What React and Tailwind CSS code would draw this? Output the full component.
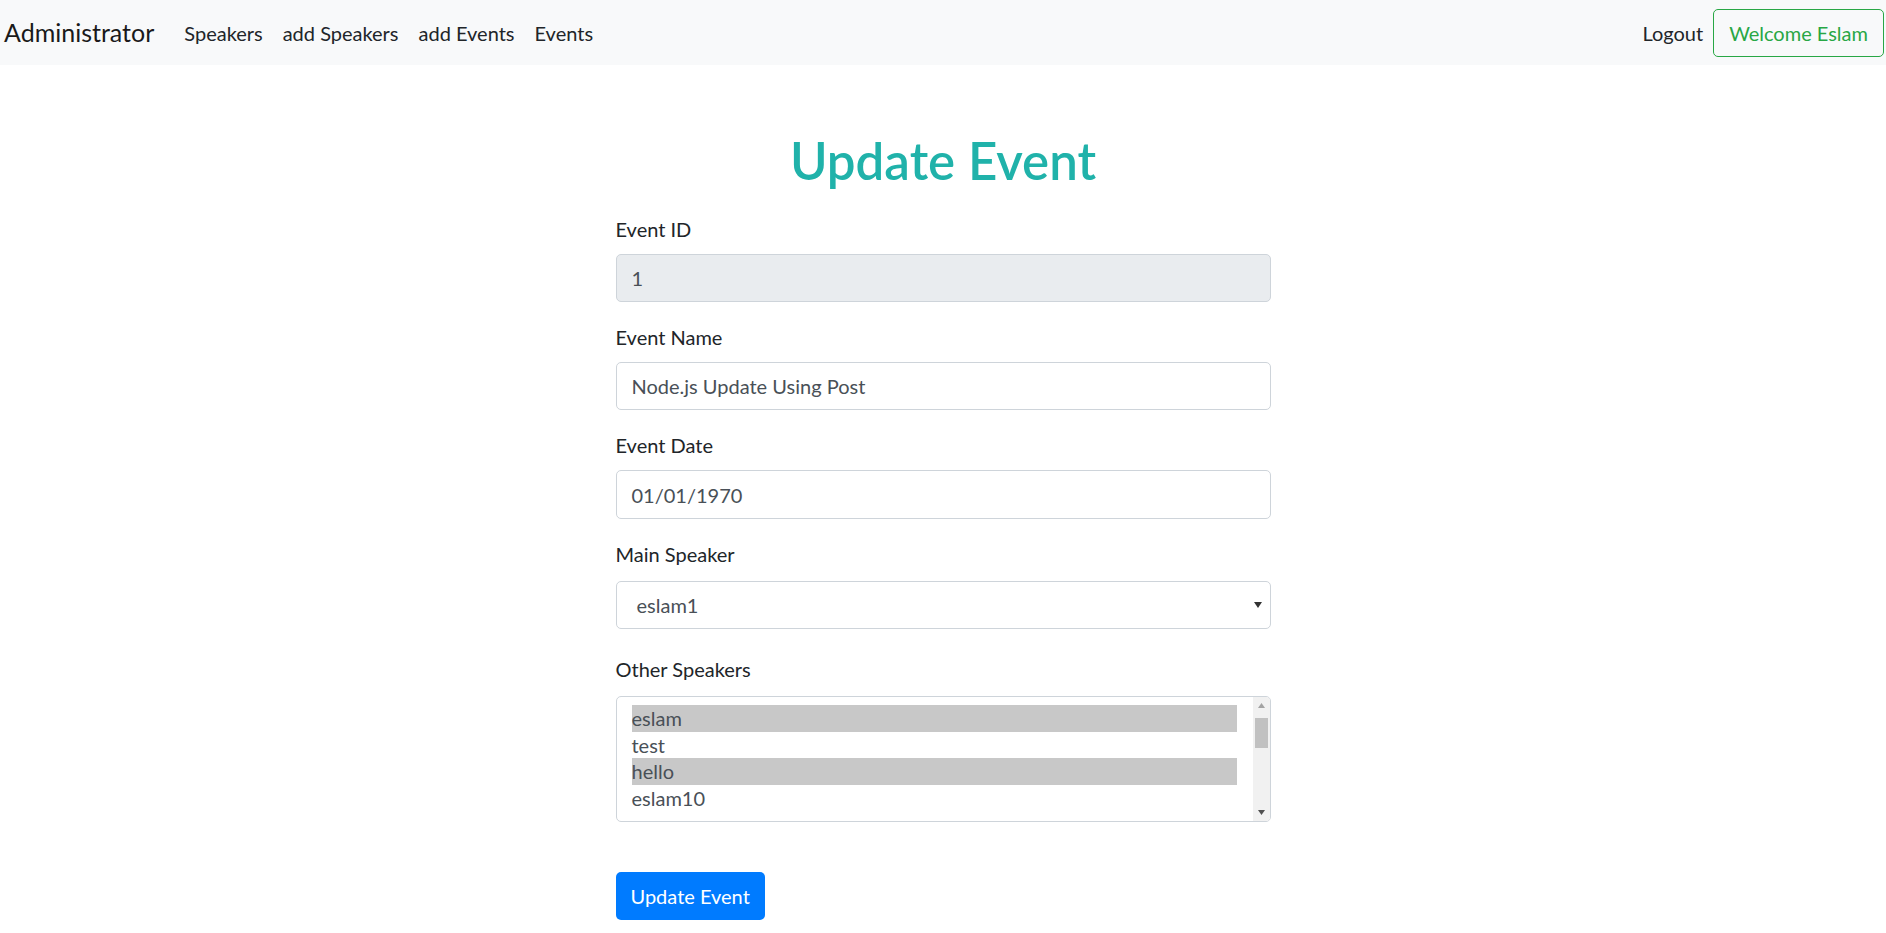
import React from 'react'

const font = { fontFamily: '"Segoe UI", Lato, "Noto Sans", sans-serif' }

function Field({ label, children, className = 'mb-[20px]', labelGap = 'mb-[10px]' }) {
  return (
    <div className={className}>
      <label className={`block text-[20px] leading-[30px] text-[#212529] ${labelGap}`}>{label}</label>
      {children}
    </div>
  )
}

function TextBox({ value, disabled, tall }) {
  return (
    <div
      className={`${tall ? 'h-[49px]' : 'h-[48px]'} flex items-center px-[15px] border border-[#ced4da] rounded-[5px] text-[20px] text-[#495057] ${
        disabled ? 'bg-[#e9ecef]' : 'bg-white'
      }`}
    >
      {value}
    </div>
  )
}

export default function App() {
  const speakers = [
    { name: 'eslam', selected: true },
    { name: 'test', selected: false },
    { name: 'hello', selected: true },
    { name: 'eslam10', selected: false },
  ]

  return (
    <div className="min-h-screen bg-white" style={font}>
      <nav className="h-[65px] bg-[#f8f9fa] flex items-center justify-between pl-[4px] pr-[2px]">
        <div className="flex items-center">
          <span className="text-[25px] text-[#1a1a1a] mr-[20px]">Administrator</span>
          {['Speakers', 'add Speakers', 'add Events', 'Events'].map((l) => (
            <a key={l} className="px-[10px] text-[20px] text-[#212529]">
              {l}
            </a>
          ))}
        </div>
        <div className="flex items-center">
          <a className="px-[10px] text-[20px] text-[#212529]">Logout</a>
          <button className="h-[48px] px-[15px] border border-[#28a745] rounded-[5px] text-[20px] text-[#28a745]">
            Welcome Eslam
          </button>
        </div>
      </nav>

      <main className="w-[655px] mx-auto pb-[14px]">
        <h1 className="mt-[66px] mb-[23px] text-center text-[51px] leading-[60px] font-semibold text-[#20b2aa]">
          Update Event
        </h1>

        <Field label="Event ID">
          <TextBox value="1" disabled />
        </Field>
        <Field label="Event Name">
          <TextBox value="Node.js Update Using Post" />
        </Field>
        <Field label="Event Date">
          <TextBox value="01/01/1970" tall />
        </Field>
        <Field label="Main Speaker" className="mb-[25px]" labelGap="mb-[12px]">
          <div className="h-[48px] flex items-center justify-between pl-[20px] pr-[8px] border border-[#ced4da] rounded-[5px] text-[20px] text-[#495057]">
            <span>eslam1</span>
            <svg width="8" height="6" viewBox="0 0 8 6">
              <path d="M0 0h8L4 6z" fill="#333" />
            </svg>
          </div>
        </Field>
        <Field label="Other Speakers" className="mb-[50px]" labelGap="mb-[12px]">
          <div className="h-[126px] flex border border-[#ced4da] rounded-[5px] overflow-hidden">
            <div className="flex-1 pl-[15px] pr-[16px] pt-[8px]">
              {speakers.map((s) => (
                <div
                  key={s.name}
                  className={`h-[26.5px] flex items-center text-[20px] text-[#495057] ${
                    s.selected ? 'bg-[#c8c8c8]' : ''
                  }`}
                >
                  {s.name}
                </div>
              ))}
            </div>
            <div className="w-[17px] bg-[#f1f1f1] flex flex-col">
              <div className="h-[17px] flex items-center justify-center">
                <svg width="7" height="5" viewBox="0 0 7 5">
                  <path d="M0 5h7L3.5 0z" fill="#a3a3a3" />
                </svg>
              </div>
              <div className="mx-[2px] mt-[4px] h-[30px] bg-[#c1c1c1]" />
              <div className="flex-1" />
              <div className="h-[17px] flex items-center justify-center">
                <svg width="7" height="5" viewBox="0 0 7 5">
                  <path d="M0 0h7L3.5 5z" fill="#505050" />
                </svg>
              </div>
            </div>
          </div>
        </Field>

        <button className="h-[48px] px-[15px] bg-[#007bff] text-white text-[20px] rounded-[5px]">
          Update Event
        </button>
      </main>
    </div>
  )
}
